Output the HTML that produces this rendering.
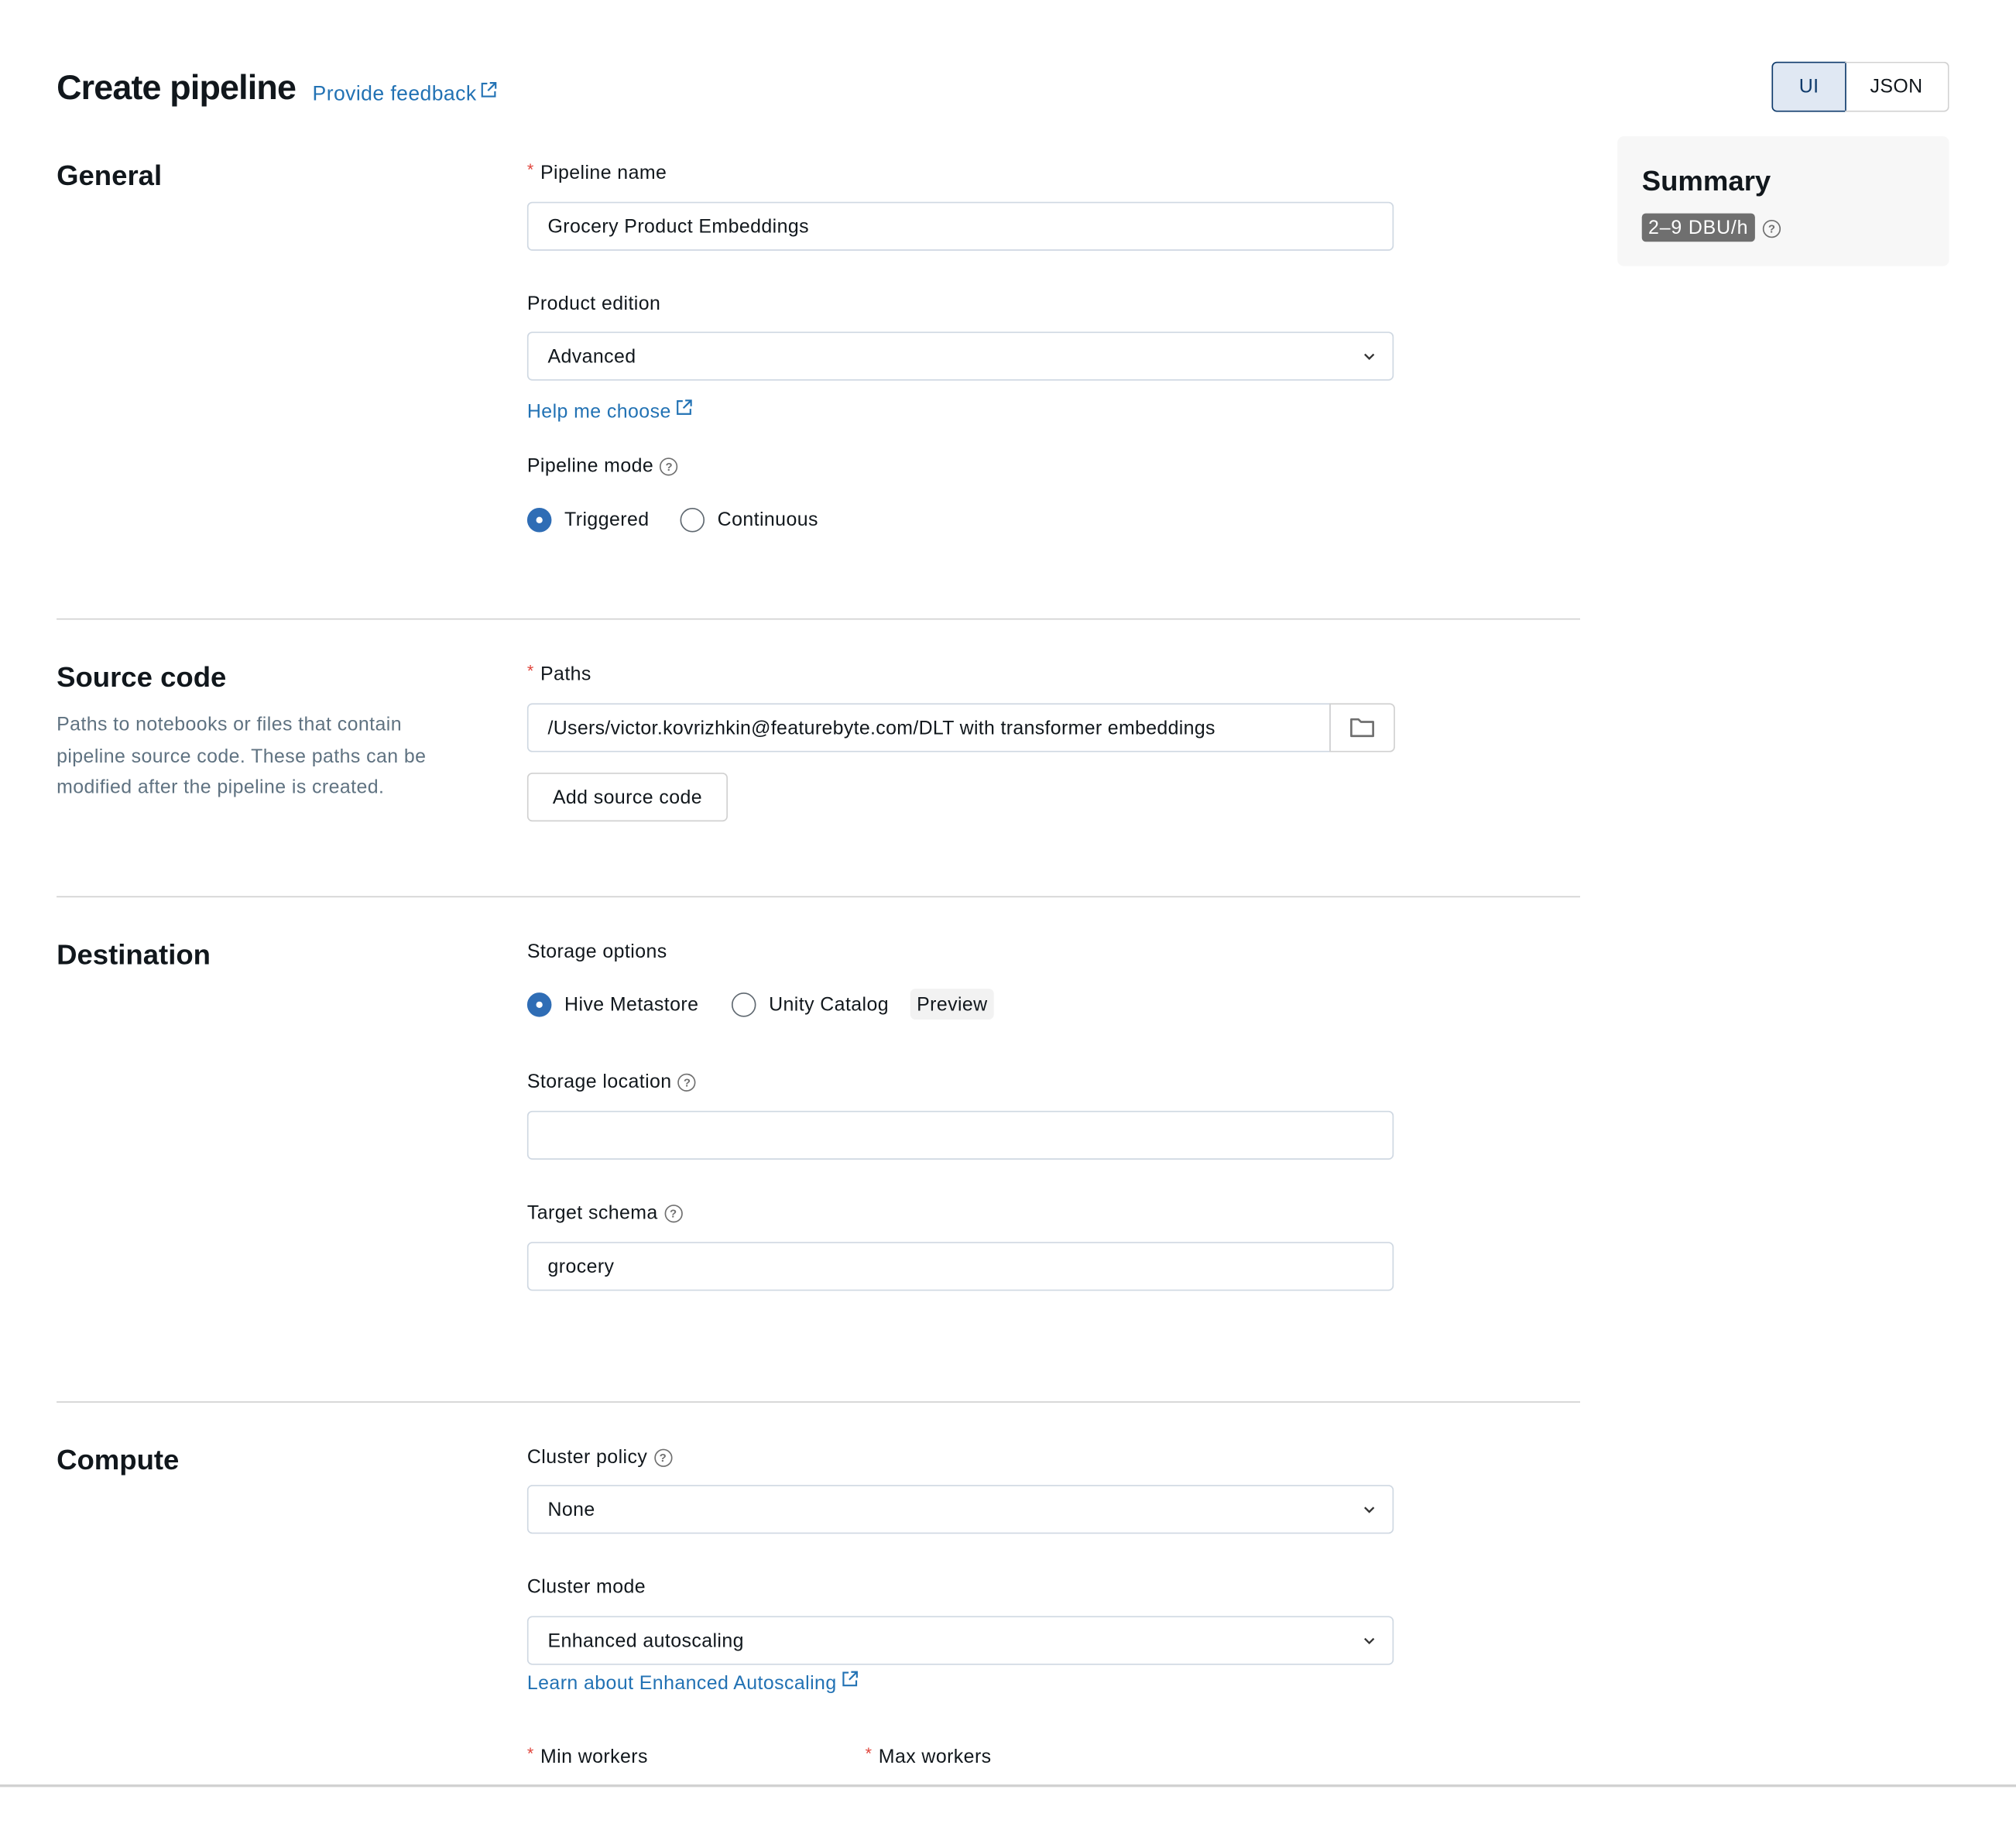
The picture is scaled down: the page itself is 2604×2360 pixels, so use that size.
<!DOCTYPE html>
<html><head><meta charset="utf-8"><style>
html,body{margin:0;padding:0;background:#fff;width:2604px;height:2360px;overflow:hidden}
#s{position:absolute;left:0;top:0;width:1568px;height:1421px;transform:scale(1.66071);transform-origin:0 0;font-family:"Liberation Sans",sans-serif;color:#11171c;font-size:15px;letter-spacing:0.25px}
.a{position:absolute;white-space:nowrap}
.h{font-size:22px;font-weight:bold;letter-spacing:0px}
.l{font-size:15px;line-height:20px}
.st{color:#e0443b;font-size:13px;position:relative;top:-3px;margin-right:5px}
.in{position:absolute;left:410px;width:672px;height:36px;border:1px solid #cfd8e2;border-radius:4px;box-sizing:content-box}
.in span{position:absolute;left:15px;top:10px;font-size:15px}
.chev{position:absolute;right:12px;top:12px}
.link{color:#2272b4}
.div{position:absolute;left:44px;width:1185px;height:1px;background:#d1d1d1}
.q{display:inline-block;width:12px;height:12px;border:1.2px solid #6f6f6f;border-radius:50%;font-size:9px;line-height:12px;text-align:center;color:#6f6f6f;vertical-align:1px;margin-left:5px;font-weight:bold;letter-spacing:0}
.ron{position:absolute;width:19px;height:19px;border-radius:50%;background:#2f6db5}
.ron:after{content:"";position:absolute;left:7px;top:7px;width:5px;height:5px;border-radius:50%;background:#fff}
.roff{position:absolute;width:17px;height:17px;border-radius:50%;border:1.3px solid #5f6870}
</style></head><body><div id="s">
<div class="a" style="left:44px;top:53px;font-size:27px;font-weight:bold;letter-spacing:-0.5px">Create pipeline</div>
<div class="a link" style="left:243px;top:63px;font-size:16px">Provide feedback<svg width="14" height="14" viewBox="0 0 14 14" style="margin-left:2px;vertical-align:1px"><path d="M6 2H2v10h10V8M8 1.5h4.5V6M12.5 1.5 6.5 7.5" fill="none" stroke="#2272b4" stroke-width="1.3"/></svg></div>
<div class="a" style="left:1378px;top:48px;width:56px;height:37px;background:#e0e8f3;border:1px solid #0e3a6b;border-radius:4px 0 0 4px;text-align:center;line-height:38px;color:#0e3a6b;font-size:15px">UI</div>
<div class="a" style="left:1435px;top:48px;width:80px;height:37px;border:1px solid #d1d1d1;border-left:none;border-radius:0 4px 4px 0;text-align:center;line-height:38px;font-size:15px">JSON</div>
<div class="a" style="left:1258px;top:106px;width:258px;height:101px;background:#f7f7f7;border-radius:5px"></div>
<div class="a h" style="left:1277px;top:128px">Summary</div>
<div class="a" style="left:1277px;top:166px;height:22px;padding:0 5px;background:#6f6f6f;color:#fff;border-radius:3px;line-height:23px;font-size:15px;letter-spacing:0.5px">2–9 DBU/h</div>
<div class="a" style="left:1366px;top:169px"><span class="q">?</span></div>

<div class="a h" style="left:44px;top:124px">General</div>
<div class="a l" style="left:410px;top:125px"><span class="st">*</span>Pipeline name</div>
<div class="in" style="top:157px"><span>Grocery Product Embeddings</span></div>
<div class="a l" style="left:410px;top:227px">Product edition</div>
<div class="in" style="top:258px"><span>Advanced</span><svg class="chev" width="12" height="12" viewBox="0 0 12 12"><path d="M2.5 4.5 6 8l3.5-3.5" fill="none" stroke="#333" stroke-width="1.4"/></svg></div>
<div class="a l link" style="left:410px;top:310px">Help me choose<svg width="14" height="14" viewBox="0 0 14 14" style="margin-left:3px;vertical-align:1px"><path d="M6 2H2v10h10V8M8 1.5h4.5V6M12.5 1.5 6.5 7.5" fill="none" stroke="#2272b4" stroke-width="1.3"/></svg></div>
<div class="a l" style="left:410px;top:353px">Pipeline mode<span class="q">?</span></div>
<div class="ron" style="left:410px;top:395px"></div>
<div class="a l" style="left:439px;top:395px">Triggered</div>
<div class="roff" style="left:529px;top:395px"></div>
<div class="a l" style="left:558px;top:395px">Continuous</div>
<div class="div" style="top:481px"></div>

<div class="a h" style="left:44px;top:514px">Source code</div>
<div class="a" style="left:44px;top:552px;color:#5f7281;font-size:15px;line-height:24.5px;white-space:normal;width:315px">Paths to notebooks or files that contain pipeline source code. These paths can be modified after the pipeline is created.</div>
<div class="a l" style="left:410px;top:515px"><span class="st">*</span>Paths</div>
<div class="in" style="top:547px;width:623px;border-radius:4px 0 0 4px"><span style="letter-spacing:0.2px">/Users/victor.kovrizhkin@featurebyte.com/DLT with transformer embeddings</span></div>
<div class="a" style="left:1034px;top:547px;width:49px;height:36px;border:1px solid #d1d1d1;border-radius:0 4px 4px 0"><svg width="20" height="16" viewBox="0 0 20 16" style="position:absolute;left:15px;top:10px"><path d="M1 1.5h5.5l2 2H18v11H1z" fill="none" stroke="#6f6f6f" stroke-width="1.6" stroke-linejoin="round"/></svg></div>
<div class="a" style="left:410px;top:601px;width:154px;height:36px;border:1px solid #d1d1d1;border-radius:4px;text-align:center;line-height:38px;font-size:15px">Add source code</div>
<div class="div" style="top:697px"></div>

<div class="a h" style="left:44px;top:730px">Destination</div>
<div class="a l" style="left:410px;top:731px">Storage options</div>
<div class="ron" style="left:410px;top:772px"></div>
<div class="a l" style="left:439px;top:772px">Hive Metastore</div>
<div class="roff" style="left:569px;top:772px"></div>
<div class="a l" style="left:598px;top:772px">Unity Catalog</div>
<div class="a" style="left:708px;top:769px;height:24px;padding:0 5px;background:#f2f2f2;border-radius:4px;line-height:25px;font-size:15px">Preview</div>
<div class="a l" style="left:410px;top:832px">Storage location<span class="q">?</span></div>
<div class="in" style="top:864px"></div>
<div class="a l" style="left:410px;top:934px">Target schema<span class="q">?</span></div>
<div class="in" style="top:966px"><span>grocery</span></div>
<div class="div" style="top:1090px"></div>

<div class="a h" style="left:44px;top:1123px">Compute</div>
<div class="a l" style="left:410px;top:1124px">Cluster policy<span class="q">?</span></div>
<div class="in" style="top:1155px"><span>None</span><svg class="chev" width="12" height="12" viewBox="0 0 12 12"><path d="M2.5 4.5 6 8l3.5-3.5" fill="none" stroke="#333" stroke-width="1.4"/></svg></div>
<div class="a l" style="left:410px;top:1225px">Cluster mode</div>
<div class="in" style="top:1257px"><span>Enhanced autoscaling</span><svg class="chev" width="12" height="12" viewBox="0 0 12 12"><path d="M2.5 4.5 6 8l3.5-3.5" fill="none" stroke="#333" stroke-width="1.4"/></svg></div>
<div class="a l link" style="left:410px;top:1299px">Learn about Enhanced Autoscaling<svg width="14" height="14" viewBox="0 0 14 14" style="margin-left:3px;vertical-align:1px"><path d="M6 2H2v10h10V8M8 1.5h4.5V6M12.5 1.5 6.5 7.5" fill="none" stroke="#2272b4" stroke-width="1.3"/></svg></div>
<div class="a l" style="left:410px;top:1357px"><span class="st">*</span>Min workers</div>
<div class="a l" style="left:673px;top:1357px"><span class="st">*</span>Max workers</div>
<div class="a" style="left:0;top:1388px;width:1568px;height:2px;background:#d1d1d1"></div>
</div></body></html>
